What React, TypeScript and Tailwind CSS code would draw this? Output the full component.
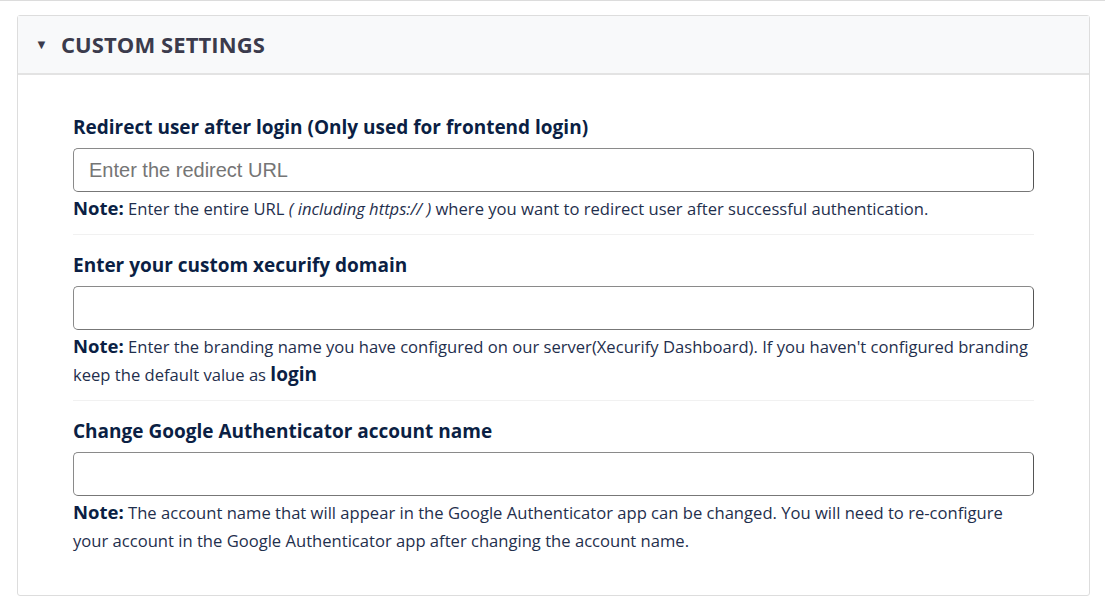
export default function App() {
  const font = { fontFamily: '"Open Sans", "Noto Sans", sans-serif' };
  return (
    <div className="min-h-[608px] w-[1105px] bg-white" style={font}>
      <div className="h-[2px] border-t border-[#dcdcdc]" />
      <div className="pl-[17px] pr-[15px] pt-[13px]">
        <div className="rounded-[3px] border border-[#dddddd] bg-white">
          <div className="flex h-[59px] items-center gap-[13px] border-b-2 border-[#e3e3e3] bg-[#f8f9fa] pl-[17px]">
            <span className="text-[13px] text-[#3b3b4c]">▼</span>
            <span className="text-[22px] font-bold tracking-[0.1px] text-[#3b3b4c]">CUSTOM SETTINGS</span>
          </div>
          <div className="px-[55px] pt-[40px] pb-[40px]">
            <Field
              label="Redirect user after login (Only used for frontend login)"
              placeholder="Enter the redirect URL"
              note={
                <>
                  Enter the entire URL <i>( including https:// )</i> where you want to redirect user after successful authentication.
                </>
              }
            />
            <hr className="mt-[11px] mb-[18px] border-t border-[#f1f1f1]" />
            <Field
              label="Enter your custom xecurify domain"
              note={
                <>
                  Enter the branding name you have configured on our server(Xecurify Dashboard). If you haven't configured branding keep the default value as{" "}
                  <b className="text-[19px] leading-[20px] text-[#0b1f44]">login</b>
                </>
              }
            />
            <hr className="mt-[11px] mb-[18px] border-t border-[#f1f1f1]" />
            <Field
              label="Change Google Authenticator account name"
              note={
                <>
                  The account name that will appear in the Google Authenticator app can be changed. You will need to re-configure your account in the Google Authenticator app after changing the account name.
                </>
              }
            />
          </div>
        </div>
      </div>
    </div>
  );
}

function Field({ label, placeholder, note }: { label: string; placeholder?: string; note: React.ReactNode }) {
  return (
    <div>
      <div className="text-[19px] leading-[24px] font-bold text-[#0b1f44]">{label}</div>
      <input
        className="mt-[9px] block h-[44px] w-full rounded-[5px] border border-[#8a8a8a] border-r-[#555] border-b-[#777] px-[15px] text-[20px] text-[#333] placeholder:text-[#757575] outline-none"
        style={{ fontFamily: '"Liberation Sans", Arial, sans-serif' }}
        placeholder={placeholder}
      />
      <p className="mt-[3px] text-[16.6px] leading-[28px] text-[#1f2f4d]">
        <b className="text-[18.5px] leading-[20px] text-[#0b1f44]">Note:</b> {note}
      </p>
    </div>
  );
}
